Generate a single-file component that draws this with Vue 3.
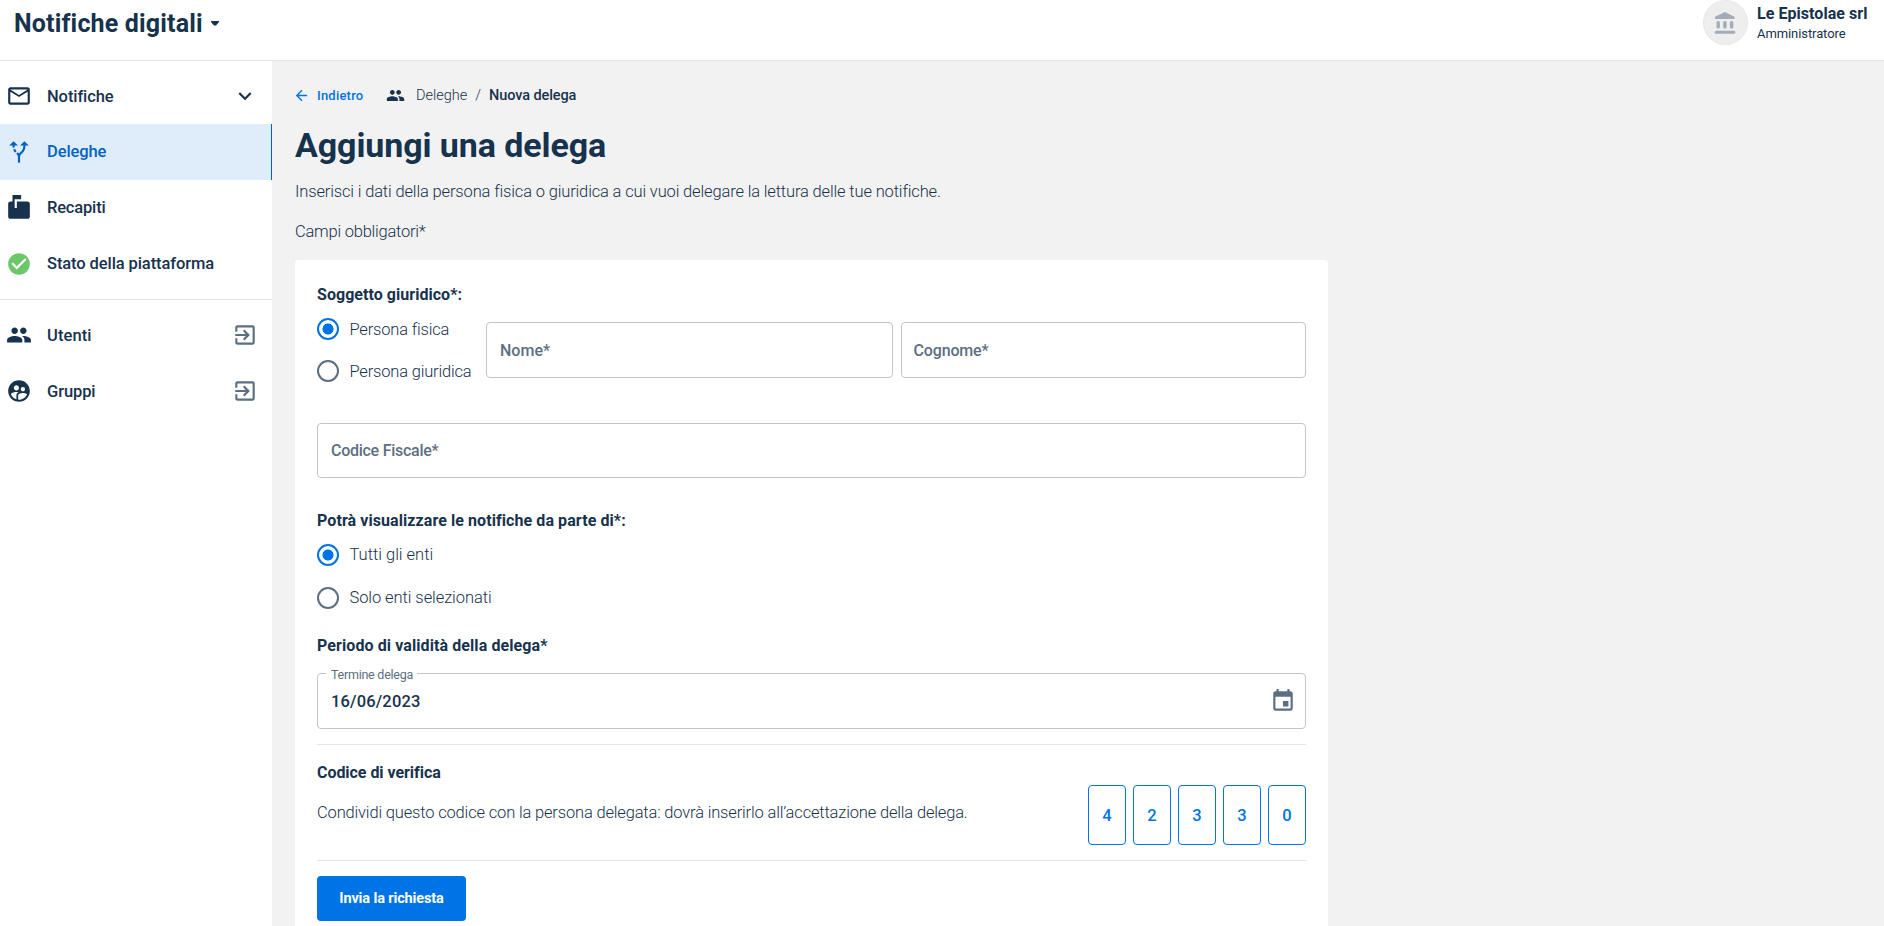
<script setup>
const ICONS = {
  mail: 'M22 6c0-1.100-.9-2-2-2H4c-1.100 0-2 .9-2 2v12c0 1.100.9 2 2 2h16c1.100 0 2-.9 2-2V6zm-2 0-8 5-8-5h16zm0 12H4V8l8 5 8-5v10z',
  fork: 'M9.780 11.160l-1.420 1.420c-.68-.69-1.340-1.580-1.790-2.940l1.940-.49c.32.89.77 1.500 1.270 2.010zM11 6L7 2 3 6h3.020c.02.81.08 1.540.19 2.170l1.940-.49C8.080 7.200 8.030 6.630 8.020 6H11zm10 0l-4-4-4 4h2.990c-.1 3.680-1.280 4.750-2.540 5.880-.5.440-1.010.92-1.450 1.550-.34-.49-.73-.88-1.130-1.240L9.460 13.600c.93.85 1.540 1.540 1.540 3.400v5h2v-5c0-2.020.71-2.660 1.790-3.630 1.380-1.240 3.080-2.780 3.200-7.370H21z',
  mailbox: 'M20 6H10v6H8V4h6V0H6v6H4c-1.100 0-2 .9-2 2v12c0 1.100.9 2 2 2h16c1.100 0 2-.9 2-2V8c0-1.100-.9-2-2-2z',
  check: 'M12 2C6.480 2 2 6.480 2 12s4.480 10 10 10 10-4.480 10-10S17.520 2 12 2zm-2 15l-5-5 1.410-1.410L10 14.170l7.590-7.590L19 8l-9 9z',
  people: 'M16 11c1.660 0 2.990-1.340 2.990-3S17.660 5 16 5s-3 1.340-3 3 1.340 3 3 3zm-8 0c1.660 0 2.990-1.340 2.990-3S9.660 5 8 5 5 6.340 5 8s1.340 3 3 3zm0 2c-2.330 0-7 1.170-7 3.500V19h14v-2.500c0-2.330-4.670-3.500-7-3.500zm8 0c-.29 0-.62.02-.97.05 1.160.84 1.970 1.970 1.970 3.450V19h6v-2.500c0-2.330-4.670-3.500-7-3.500z',
  groups: 'M12 2C6.480 2 2 6.480 2 12s4.480 10 10 10 10-4.480 10-10S17.520 2 12 2zm3.610 6.340c1.070 0 1.930.86 1.930 1.930 0 1.070-.86 1.930-1.930 1.930-1.070 0-1.930-.86-1.930-1.930-.01-1.070.86-1.930 1.930-1.930zm-6-1.580c1.300 0 2.360 1.060 2.360 2.360 0 1.300-1.060 2.360-2.360 2.360s-2.360-1.060-2.360-2.360c0-1.310 1.050-2.360 2.360-2.360zm0 9.130v3.750c-2.400-.75-4.300-2.600-5.140-4.960 1.050-1.120 3.670-1.690 5.140-1.690.53 0 1.200.08 1.900.22-1.640.87-1.900 2.020-1.900 2.680zM12 20c-.27 0-.53-.01-.79-.04v-4.070c0-1.420 2.940-2.130 4.400-2.130 1.070 0 2.920.39 3.840 1.150-1.170 2.970-4.060 5.090-7.450 5.090z',
  exit: 'M10.090 15.590L11.500 17l5-5-5-5-1.410 1.410L12.670 11H3v2h9.670l-2.580 2.590zM19 3H5c-1.110 0-2 .9-2 2v4h2V5h14v14H5v-4H3v4c0 1.100.89 2 2 2h14c1.100 0 2-.9 2-2V5c0-1.100-.9-2-2-2z',
  chevron: 'M7.410 8.590 12 13.170l4.590-4.580L18 10l-6 6-6-6 1.410-1.410z',
  calendar: 'M17 12h-5v5h5v-5zM16 1v2H8V1H6v2H5c-1.110 0-1.990.9-1.990 2L3 19c0 1.100.89 2 2 2h14c1.100 0 2-.9 2-2V5c0-1.100-.9-2-2-2h-1V1h-2zm3 18H5V8h14v11z',
  back: 'M20 11H7.830l5.590-5.590L12 4l-8 8 8 8 1.410-1.410L7.830 13H20v-2z',
}

const mainNav = [
  { label: 'Notifiche', icon: 'mail', cls: 't-tight', end: 'chevron' },
  { label: 'Deleghe', icon: 'fork', cls: 't-tight raised', active: true },
  { label: 'Recapiti', icon: 'mailbox', cls: 't-tighter raised' },
  { label: 'Stato della piattaforma', icon: 'check', cls: 't-tight raised', ok: true },
]
const orgNav = [
  { label: 'Utenti', icon: 'people', cls: 't-wide', end: 'exit' },
  { label: 'Gruppi', icon: 'groups', cls: 't-tight', end: 'exit' },
]
const code = ['4', '2', '3', '3', '0']
</script>

<template>
  <div class="page">
    <header class="header">
      <div class="product">
        <span class="product-name">Notifiche digitali</span>
        <svg class="caret" viewBox="0 0 8 5"><path d="M0 0h8v1L5 4.500H3L0 1z" /></svg>
      </div>
      <div class="account">
        <div class="avatar">
          <svg viewBox="0 0 22 22">
            <path d="M11 0 20.500 4.800Q21 7 20 7H1.500Q.5 7 1 4.800z" />
            <rect x="2.500" y="9" width="3.400" height="7.500" rx="1.500" />
            <rect x="9.200" y="9" width="3.400" height="7.500" rx="1.500" />
            <rect x="15.900" y="9" width="3.400" height="7.500" rx="1.500" />
            <rect x=".7" y="18.700" width="20.600" height="3" rx="1.500" />
          </svg>
        </div>
        <div class="account-text">
          <div class="account-name">Le Epistolae srl</div>
          <div class="account-role">Amministratore</div>
        </div>
      </div>
    </header>

    <div class="body">
      <nav class="sidebar">
        <a v-for="i in mainNav" :key="i.label" class="nav-item" :class="{ active: i.active, ok: i.ok }">
          <svg class="nav-icon" viewBox="0 0 24 24"><path :d="ICONS[i.icon]" /></svg>
          <span class="nav-label" :class="i.cls">{{ i.label }}</span>
          <svg v-if="i.end" class="nav-end" :class="i.end" viewBox="0 0 24 24"><path :d="ICONS[i.end]" /></svg>
        </a>
        <div class="nav-divider"></div>
        <a v-for="i in orgNav" :key="i.label" class="nav-item">
          <svg class="nav-icon" viewBox="0 0 24 24"><path :d="ICONS[i.icon]" /></svg>
          <span class="nav-label" :class="i.cls">{{ i.label }}</span>
          <svg class="nav-end" :class="i.end" viewBox="0 0 24 24"><path :d="ICONS[i.end]" /></svg>
        </a>
      </nav>

      <main class="main">
        <div class="crumbs">
          <svg class="back-icon" viewBox="0 0 24 24"><path :d="ICONS.back" /></svg>
          <a class="back">Indietro</a>
          <svg class="crumb-icon" viewBox="0 0 24 24"><path :d="ICONS.people" /></svg>
          <span class="crumb">Deleghe</span>
          <span class="slash">/</span>
          <span class="current">Nuova delega</span>
        </div>
        <h1 class="title">Aggiungi una delega</h1>
        <p class="lead">Inserisci i dati della persona fisica o giuridica a cui vuoi delegare la lettura delle tue notifiche.</p>
        <p class="required">Campi obbligatori*</p>

        <form class="card">
          <h2 class="heading">Soggetto giuridico*:</h2>
          <div class="subject">
            <div class="radios">
              <label class="radio"><i class="dot on"></i><span class="t-person">Persona fisica</span></label>
              <label class="radio"><i class="dot"></i><span class="t-person">Persona giuridica</span></label>
            </div>
            <div class="field"><span class="t-name">Nome*</span></div>
            <div class="field surname"><span class="t-tight">Cognome*</span></div>
          </div>
          <div class="field fiscal"><span class="t-fiscal">Codice Fiscale*</span></div>

          <h2 class="heading viewers">Potrà visualizzare le notifiche da parte di*:</h2>
          <div class="radios tall">
            <label class="radio"><i class="dot on"></i><span>Tutti gli enti</span></label>
            <label class="radio"><i class="dot"></i><span class="t-only">Solo enti selezionati</span></label>
          </div>

          <h2 class="heading period">Periodo di validità della delega*</h2>
          <div class="field date">
            <span class="legend">Termine delega</span>
            <span class="value">16/06/2023</span>
            <svg class="calendar" viewBox="0 0 24 24"><path :d="ICONS.calendar" /></svg>
          </div>

          <section class="verify">
            <div>
              <h2 class="heading verify-title">Codice di verifica</h2>
              <p class="share">Condividi questo codice con la persona delegata: dovrà inserirlo all’accettazione della delega.</p>
            </div>
            <div class="code"><b v-for="(d, k) in code" :key="k">{{ d }}</b></div>
          </section>

          <button type="button" class="submit">Invia la richiesta</button>
        </form>
      </main>
    </div>
  </div>
</template>

<style>
body { overflow: hidden; }
</style>

<style scoped>
.page { height: 926px; display: flex; flex-direction: column; overflow: hidden; background: #f2f2f2; color: #17324d; font-family: Roboto, "Liberation Sans", sans-serif; font-size: 16.5px; white-space: nowrap; }
svg { display: block; flex: none; fill: currentColor; }
h1, h2, p { margin: 0; }
.header { flex: none; box-sizing: border-box; height: 61px; display: flex; justify-content: space-between; align-items: flex-start; background: #fff; border-bottom: 1px solid #e3e7eb; }
.product { display: flex; align-items: center; height: 46px; padding-left: 14px; }
.product-name { font-size: 25px; font-weight: 700; letter-spacing: 0.168px; }
.caret { width: 8px; height: 5px; margin-left: 8px; }
.account { display: flex; width: 181px; }
.avatar { box-sizing: border-box; width: 45px; height: 45px; display: grid; place-items: center; border: 1px solid #e3e7eb; border-radius: 50%; background: #eee; color: #a2adb8; }
.avatar svg { width: 22px; height: 22px; margin-right: 2px; }
.account-text { margin-left: 9px; padding-top: 3px; }
.account-name { font-size: 16px; line-height: 22px; font-weight: 700; letter-spacing: 0.05px; }
.account-role { font-size: 13px; line-height: 18px; letter-spacing: -0.085px; }
.body { flex: 1; display: flex; min-height: 0; }
.sidebar { flex: none; width: 272px; padding-top: 7px; box-sizing: border-box; background: #fff; }
.nav-item { box-sizing: border-box; height: 56px; display: flex; align-items: center; padding: 0 14px 0 6px; }
.nav-item.active { background: #dfedfb; color: #0062c3; border-right: 1px solid #0062c3; }
.nav-icon { width: 26px; height: 26px; margin-right: 15px; }
.ok .nav-icon { color: #6cc66a; }
.nav-label { font-size: 16.5px; font-weight: 500; }
.nav-label.raised { padding-bottom: 2px; }
.t-tight { letter-spacing: -0.095px; }
.t-tighter { letter-spacing: -0.178px; }
.t-wide { letter-spacing: 0.1px; }
.nav-end { width: 26px; height: 26px; margin-left: auto; }
.nav-end.exit { color: #5c6f82; }
.nav-divider { height: 1px; margin: 7px 0; background: #e3e3e3; }
.main { flex: none; width: 1033px; padding-left: 23px; display: flex; flex-direction: column; }
.crumbs { display: flex; align-items: center; height: 24px; margin-top: 22px; font-size: 14.5px; }
.back-icon { width: 17px; height: 17px; margin-left: -2px; color: #0073e6; }
.back { color: #0073e6; font-size: 13px; font-weight: 500; letter-spacing: 0.22px; margin-left: 7px; width: 46px; }
.crumb-icon { width: 19px; height: 19px; margin-left: 23px; }
.crumb { margin-left: 11px; font-weight: 300; }
.slash { margin: 0 8px; font-weight: 300; }
.current { font-weight: 500; letter-spacing: -0.1px; }
.title { margin-top: 18px; line-height: 40px; font-size: 34px; font-weight: 700; letter-spacing: -0.09px; }
.lead, .required, .share { line-height: 24px; font-weight: 300; }
.lead { margin-top: 15px; letter-spacing: -0.15px; }
.required { margin-top: 16px; letter-spacing: -0.23px; }
.card { flex: 1; box-sizing: border-box; margin-top: 16px; padding: 23px 22px 0; border-radius: 4px 4px 0 0; background: #fff; }
.heading { font-size: 16px; line-height: 24px; font-weight: 700; letter-spacing: 0.04px; }
.subject { display: flex; gap: 8px; padding-bottom: 1px; }
.radios { width: 161px; padding-top: 1px; font-weight: 300; }
.radio { display: flex; align-items: center; height: 42px; }
.t-person { letter-spacing: -0.19px; }
.dot { flex: none; box-sizing: border-box; width: 22px; height: 22px; margin-right: 10.5px; border: 2px solid #5c6f82; border-radius: 50%; }
.dot.on { border-color: #0073e6; background: radial-gradient(circle, #0073e6 5.3px, transparent 5.8px); }
.field { flex: 1; box-sizing: border-box; height: 56px; margin-top: 15px; padding: 0 13px; display: flex; align-items: center; border: 1px solid #c4c4c4; border-radius: 4px; color: #5c6f82; font-size: 16px; font-weight: 500; }
.surname { padding-left: 12px; }
.t-name { letter-spacing: 0.02px; }
.surname .t-tight { letter-spacing: -0.15px; }
.fiscal { height: 55px; margin-top: 30px; }
.t-fiscal { letter-spacing: -0.27px; }
.viewers { margin-top: 31px; letter-spacing: 0.076px; }
.tall { width: auto; padding: 0; }
.tall .radio { height: 43px; }
.t-only { letter-spacing: -0.08px; }
.period { margin-top: 15px; letter-spacing: 0.089px; }
.date { position: relative; }
.legend { position: absolute; left: 8px; top: -8px; padding: 0 4px 0 5px; background: #fff; font-size: 12.5px; line-height: 18px; font-weight: 400; letter-spacing: -0.25px; }
.value { color: #17324d; font-size: 16.5px; letter-spacing: 0.16px; }
.calendar { width: 26px; height: 26px; margin-left: auto; margin-right: -4px; }
.verify { display: flex; justify-content: space-between; box-sizing: border-box; height: 117px; margin-top: 15px; padding-top: 16px; border-top: 1px solid #e3e7eb; border-bottom: 1px solid #e3e7eb; }
.verify-title { letter-spacing: -0.045px; }
.share { margin-top: 16px; letter-spacing: -0.167px; }
.code { display: flex; gap: 7px; margin-top: 24px; height: 60px; }
.code b { box-sizing: border-box; width: 38px; display: grid; place-items: center; border: 1px solid #0073e6; border-radius: 4px; color: #0073e6; font-size: 16.5px; font-weight: 500; }
.submit { height: 45px; width: 149px; margin-top: 15px; padding: 0; border: 0; border-radius: 4px; background: #0073e6; color: #fff; font-family: inherit; font-size: 14.5px; font-weight: 700; letter-spacing: -0.13px; }
</style>
